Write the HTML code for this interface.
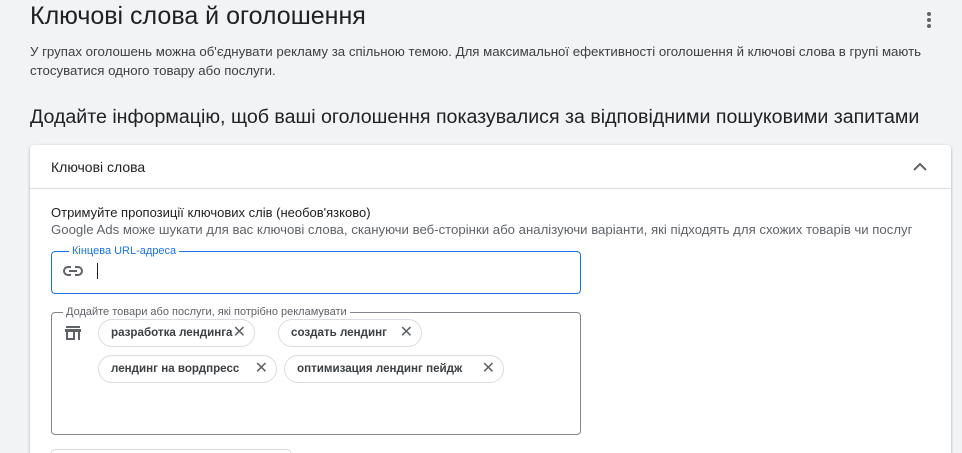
<!DOCTYPE html>
<html><head><meta charset="utf-8"><style>
*{margin:0;padding:0;box-sizing:border-box}
html,body{width:962px;height:453px;overflow:hidden}
body{background:#f1f3f4;font-family:"Liberation Sans",Arial,sans-serif;color:#202124;position:relative}
.a{position:absolute;white-space:nowrap}
.card{position:absolute;left:30px;top:145px;width:921px;height:330px;background:#fff;border-radius:4px;box-shadow:0 1px 2px rgba(60,64,67,.3),0 1px 3px rgba(60,64,67,.15)}
.box{position:absolute;left:51px;width:530px;border-radius:4px}
.lbl{position:absolute;background:#fff;padding:0 3px;font-size:11px;line-height:12px}
.chip{position:absolute;height:28px;border:1px solid #dadce0;border-radius:14px;font-size:11.6px;font-weight:bold;color:#3c4043;line-height:26px;padding-left:12px}
.chip span{position:absolute;right:8px;top:0;font-weight:normal;font-size:16px;color:#5f6368}
</style></head><body>
<div class="a" style="left:30px;top:2px;font-size:25px;color:#202124">Ключові слова й оголошення</div>
<div class="a" style="left:927px;top:12px;width:4px">
<div style="width:4px;height:4px;border-radius:2px;background:#5f6368;margin-bottom:2px"></div>
<div style="width:4px;height:4px;border-radius:2px;background:#5f6368;margin-bottom:2px"></div>
<div style="width:4px;height:4px;border-radius:2px;background:#5f6368"></div></div>
<div class="a" style="left:30px;top:42px;font-size:13.25px;line-height:19px;color:#3c4043">У групах оголошень можна об'єднувати рекламу за спільною темою. Для максимальної ефективності оголошення й ключові слова в групі мають<br>стосуватися одного товару або послуги.</div>
<div class="a" style="left:30px;top:106px;font-size:19.6px;color:#202124">Додайте інформацію, щоб ваші оголошення показувалися за відповідними пошуковими запитами</div>
<div class="card"></div>
<div class="a" style="left:30px;top:188px;width:921px;height:1px;background:#dadce0"></div>
<div class="a" style="left:51px;top:159px;font-size:14px">Ключові слова</div>
<svg class="a" style="left:910px;top:158px" width="20" height="16" viewBox="0 0 20 16"><path d="M4 12 L10 6 L16 12" fill="none" stroke="#5f6368" stroke-width="2"/></svg>
<div class="a" style="left:51px;top:205px;font-size:13px;color:#202124">Отримуйте пропозиції ключових слів (необов'язково)</div>
<div class="a" style="left:51px;top:222px;font-size:13.2px;color:#5f6368">Google Ads може шукати для вас ключові слова, скануючи веб-сторінки або аналізуючи варіанти, які підходять для схожих товарів чи послуг</div>
<div class="box" style="top:251px;height:43px;border:1px solid #1a73e8"></div>
<div class="lbl" style="left:69px;top:245px;color:#1a73e8">Кінцева URL-адреса</div>
<svg class="a" style="left:63px;top:263px" width="20" height="16" viewBox="0 0 20 16"><path d="M8 4H5a4 4 0 0 0 0 8h3M12 4h3a4 4 0 0 1 0 8h-3M6 8h8" fill="none" stroke="#5f6368" stroke-width="2"/></svg>
<div class="a" style="left:97px;top:263px;width:1px;height:16px;background:#202124"></div>
<div class="box" style="top:312px;height:123px;border:1px solid #80868b"></div>
<div class="lbl" style="left:63px;top:306px;color:#5f6368">Додайте товари або послуги, які потрібно рекламувати</div>
<svg class="a" style="left:64px;top:325px" width="18" height="16" viewBox="0 0 18 16"><path d="M2 1h14v2H2zM1 4h16v3H1zM2 7h2v8H2zM14 7h2v8h-2zM4 13h7v2H4zM9 7h2v8H9z" fill="#5f6368"/></svg>
<div class="chip" style="left:98px;top:319px;width:157px">разработка лендинга<span>✕</span></div>
<div class="chip" style="left:278px;top:319px;width:144px">создать лендинг<span>✕</span></div>
<div class="chip" style="left:98px;top:355px;width:179px">лендинг на вордпресс<span>✕</span></div>
<div class="chip" style="left:284px;top:355px;width:220px">оптимизация лендинг пейдж<span>✕</span></div>
<div class="a" style="left:51px;top:449px;width:240px;height:10px;border:1px solid #dadce0;border-radius:4px"></div>
</body></html>
